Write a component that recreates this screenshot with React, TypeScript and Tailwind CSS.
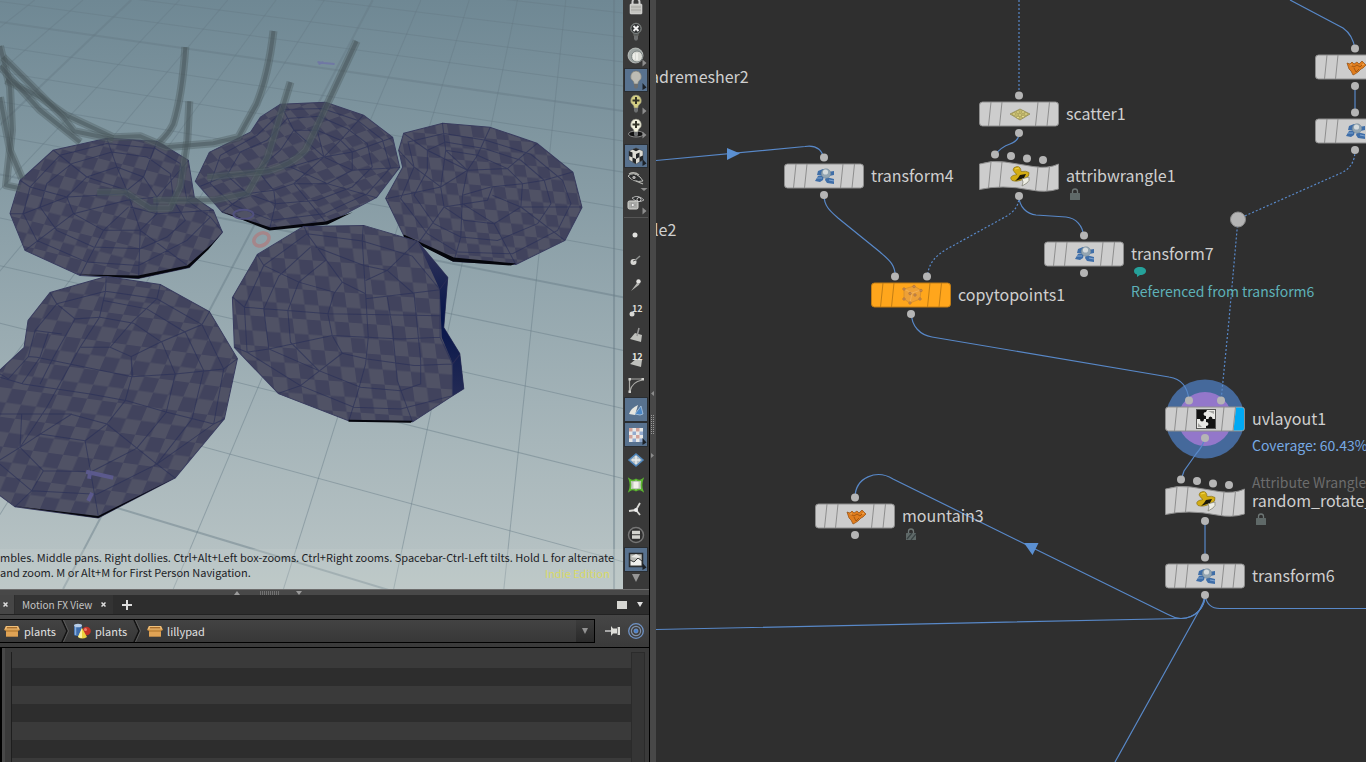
import type { ReactNode } from "react";

type Pt = [number, number];

/* ---------- 3D viewport ---------- */

const VIEW_W = 623;
const VIEW_H = 588;

// Where each floor line meets the right side of the view; every fifth is heavier.
const floorRows: { y: number; heavy?: boolean }[] = [
  { y: -10 }, { y: 13 }, { y: 37 }, { y: 62 }, { y: 86 },
  { y: 111, heavy: true }, { y: 141 }, { y: 172 }, { y: 208 }, { y: 250 },
  { y: 297, heavy: true }, { y: 350 }, { y: 408 }, { y: 478 }, { y: 561 },
  { y: 660, heavy: true },
];
const floorColumns = Array.from({ length: 14 }, (_, i) => ({
  top: 613 - i * 48.2,
  bottom: 613 - i * 110,
  heavy: i % 5 === 0,
}));

interface PadData {
  id: string;
  outline: Pt[];
  matrix: string;
  mesh: string;
  meshOrigin: string;
  shadow: string;
}

const pads: PadData[] = [
  {
    id: "pad-a",
    outline: [[107, 138], [157, 141], [188, 160], [194, 197], [213, 210], [222, 232], [208, 248], [189, 267], [138, 278], [80, 275], [25, 250], [10, 213], [20, 180], [53, 150]],
    matrix: "matrix(12 3 -5 12 4 2)",
    meshOrigin: "translate(0 0) scale(0.3333)",
    mesh: "M320 430L465 445L540 490L560 600L630 650L560 720L415 795L260 785L110 720L70 640L90 560L180 465ZM335 455L440 470L510 520L520 600L555 660L500 710L420 745L280 740L170 690L120 620L140 550L215 490ZM350 500L430 530L470 590L470 640L420 690L310 690L220 640L200 590L260 530ZM320 415L350 500L380 570L420 690L415 833M470 422L430 530L380 570M565 480L470 590L380 600M582 590L560 600L520 600M640 630L470 640L390 620M667 695L630 650M568 800L420 690M240 825L310 690L385 620M75 750L220 640L380 600M30 640L70 640L200 590L380 580M60 540L90 560L200 590M160 450L260 530L380 570",
    shadow: "M78 274 L138 278 L189 267 L208 249 L222 232 L212 243 L187 265 L138 275 Z",
  },
  {
    id: "pad-b",
    outline: [[280, 104], [325, 102], [363, 115], [392, 137], [399, 167], [376, 197], [327, 223], [269, 228], [222, 212], [200, 187], [195, 181], [209, 152], [250, 132], [260, 117]],
    matrix: "matrix(11 -4 8 9 3 0)",
    meshOrigin: "translate(200 80) scale(0.3333)",
    mesh: "M250 88L365 85L470 120L545 178L570 262L500 340L370 400L215 420L100 375L30 310L60 225L170 165ZM260 115L355 108L440 145L500 190L515 260L455 320L350 360L225 370L140 340L80 285L120 215L200 180ZM280 150L350 150L420 180L455 215L455 270L380 310L280 310L220 330L170 270L240 210ZM240 72L280 150L370 230L455 270L598 262M375 68L350 150L370 230M488 105L420 180L370 230L270 260L80 285L0 318M576 172L455 215L370 230L280 310L380 430M528 352L380 310L270 260M208 445L225 370L220 330M65 395L140 340L220 330",
    shadow: "M220 211 L269 230 L327 224 L352 212 L325 221 L270 227 Z",
  },
  {
    id: "pad-c",
    outline: [[403, 133], [442, 123], [489, 127], [536, 143], [572, 172], [581, 207], [564, 240], [515, 264], [453, 261], [418, 243], [403, 235], [385, 198], [402, 167], [398, 150]],
    matrix: "matrix(12 1 2 12 0 3)",
    meshOrigin: "translate(200 80) scale(0.3333)",
    mesh: "M622 185L730 160L855 180L990 222L1085 300L1110 370L1070 450L935 520L770 515L680 460L600 355L640 260ZM680 210L735 185L850 205L960 240L1030 300L1050 370L1010 430L890 480L780 470L700 430L640 345L680 270ZM735 210L830 225L920 265L965 310L960 380L880 430L790 420L730 380L720 320ZM725 128L735 210L800 270L785 345L780 470L760 540M868 142L830 225L800 270M1008 190L920 265L800 270L720 320L556 355M1115 275L1030 300L965 310L870 320L785 345M1143 380L960 380L875 345M1092 480L960 380M945 552L880 430L785 370M610 160L680 210L800 270M594 210L640 260L720 320M655 485L730 380L860 360L875 320",
    shadow: "M403 234 L418 241 L453 257 L515 263 L510 265 L452 261 L420 245 L403 237 Z",
  },
  {
    id: "pad-e",
    outline: [[106, 276], [160, 284], [209, 311], [237, 358], [224, 418], [175, 477], [98, 517], [15, 506], [-20, 480], [-20, 388], [24, 347], [28, 320], [50, 292]],
    matrix: "matrix(15 2 -6 14 3 2)",
    meshOrigin: "translate(0 250) scale(0.3333)",
    mesh: "M318 78L316 122L298 200L240 290L140 470L60 590L-20 640M480 102L470 145L395 215L330 290M628 182L605 222L480 275L393 318L398 378M710 325L670 355L525 370L395 378L110 320L85 318M672 505L640 520L500 485L380 450L270 430L70 400L0 380M525 682L470 640L410 592L320 520L210 490L0 490M295 800L290 770L255 570L320 520M45 768L95 720L130 660L255 662M150 127L170 160L225 205L300 200L400 218L485 275L525 370L498 485L410 592L275 662M316 122L470 145L605 222L670 355L640 520L470 640L290 730L95 720L0 640M170 160L105 240L85 318L25 385L0 370M316 122L170 160M310 150L440 175L555 245L610 360L575 505L470 640M393 318L395 378L375 450L320 520M145 245L120 320L65 400M225 205L160 320L120 400M185 250L105 240M65 490L60 590L130 660M120 550L60 590M120 550L255 570M215 490L120 550M240 290L330 290L393 318",
    shadow: "M12 505 L98 517 L175 477 L98 515 Z",
  },
  {
    id: "pad-d",
    outline: [[303, 226], [363, 225], [417, 241], [447, 277], [443, 327], [459, 353], [463, 388], [452, 395], [412, 421], [348, 420], [278, 393], [234, 347], [232, 297], [257, 254]],
    matrix: "matrix(14 1 2 15 0 0)",
    meshOrigin: "translate(200 80) scale(0.3333)",
    mesh: "M320 460L485 482L635 527L718 628L718 770L755 850L755 945L600 985L460 980L300 915L140 815L132 680L190 555ZM330 500L235 587L190 685L205 805L355 870L480 920L600 930L660 910L660 840L640 640L560 570L490 555L345 500M375 540L295 605L262 690L270 785L355 870M425 605L400 640L382 700L395 765L425 818L500 835L640 855M310 437L320 460L425 605L495 640M488 434L485 482L495 640L503 770L495 850L470 940L445 1020M170 522L190 555L295 605L400 635M97 650L132 680L262 690L385 700L718 706M103 800L140 815L205 805L395 765L500 770L600 775L718 770M235 938L300 915L425 818M650 482L560 570L495 600M718 628L495 655M755 850L640 855M635 1023L590 900L575 740L560 650",
    shadow: "M348 419 L412 420 L410 422 L348 421 Z",
  },
];

const stems = [
  "M185 47 Q182 95 173 124 Q168 134 159 142",
  "M189 101 L187 140 L180 186 L170 208 L150 208 L125 192 L97 192",
  "M273 31 Q268 75 256 104 L238 137 L213 143 L166 147 L140 136 L113 137 L66 115 L40 97 L6 80",
  "M290 82 L267 157 L247 193 L213 200 L153 200",
  "M356 41 L330 97 L305 150 Q292 164 267 171 L207 177",
  "M0 46 L10 87 L12 130 L6 185 L20 188",
  "M3 57 L63 117 L74 131 L113 139",
  "M0 66 L40 110 L80 142",
  "M0 97 L10 150 L22 178",
];

const toPoints = (pts: Pt[]) => pts.map((p) => p.join(",")).join(" ");

function Pad({ pad }: { pad: PadData }) {
  return (
    <g>
      <defs>
        <pattern id={pad.id} width="2" height="2" patternUnits="userSpaceOnUse" patternTransform={pad.matrix}>
          <rect width="2" height="2" fill="#41435d" />
          <rect width="1" height="1" fill="#505265" />
          <rect x="1" y="1" width="1" height="1" fill="#505265" />
        </pattern>
      </defs>
      <polygon points={toPoints(pad.outline)} fill={`url(#${pad.id})`} stroke="#393c5e" />
      <path d={pad.mesh} transform={pad.meshOrigin} fill="none" stroke="#2a2f58" strokeOpacity="0.65" strokeWidth="3" />
      <path d={pad.shadow} fill="#05060c" />
    </g>
  );
}

function Scene() {
  return (
    <svg className="block h-full w-full" viewBox={`0 0 ${VIEW_W} ${VIEW_H}`} preserveAspectRatio="xMinYMin slice" role="img" aria-label="Lily pads in perspective view">
      <defs>
        <linearGradient id="sky" x1="0" y1="0" x2="0" y2="1">
          <stop offset="0" stopColor="#6f8894" />
          <stop offset="0.5" stopColor="#94a7ae" />
          <stop offset="1" stopColor="#bac5c6" />
        </linearGradient>
        <linearGradient id="side" x1="0" y1="0" x2="0" y2="1">
          <stop offset="0" stopColor="#34365a" />
          <stop offset="0.5" stopColor="#06154a" />
          <stop offset="1" stopColor="#242b55" />
        </linearGradient>
      </defs>
      <rect width={VIEW_W} height={VIEW_H} fill="url(#sky)" />
      <g stroke="#667a85" strokeOpacity="0.45">
        {floorRows.map(({ y, heavy }) => {
          const slope = 0.143 + (y - 111) * 0.00029;
          return <line key={y} x1="0" y1={y - VIEW_W * slope} x2={VIEW_W} y2={y} strokeWidth={heavy ? 2 : 1} />;
        })}
        {floorColumns.map(({ top, bottom, heavy }) => (
          <line key={top} x1={top} y1="0" x2={bottom} y2={VIEW_H} strokeWidth={heavy ? 2 : 1} />
        ))}
      </g>
      {pads.map((pad) => (
        <Pad key={pad.id} pad={pad} />
      ))}
      <path d="M417 241 L447 277 L443 327 L459 353 L463 388 L452 395 L452 363 L441 337 L439 289 Z" fill="url(#side)" />
      <path d="M452 363 L459 354 M439 289 L447 278" stroke="#282b54" />
      <g fill="none" strokeLinejoin="round">
        {stems.map((d) => (
          <g key={d}>
            <path d={d} stroke="#465257" strokeOpacity="0.35" strokeWidth="8" />
            <path d={d} stroke="#7d8b90" strokeOpacity="0.2" strokeWidth="6" />
            <path d={d} stroke="#3d494d" strokeOpacity="0.4" strokeWidth="4" />
          </g>
        ))}
      </g>
      <ellipse cx="261" cy="239" rx="8" ry="6" fill="none" stroke="#a5868a" strokeWidth="3.5" transform="rotate(-30 261 239)" />
      <ellipse cx="243" cy="214" rx="10" ry="4.500" fill="none" stroke="#50507e" strokeWidth="2" />
      <path d="M317 62 l6 1 l11 1 M318 64 l5 -2" stroke="#7078a4" strokeWidth="2" fill="none" />
      <path d="M86 471 l27 6 M90 470 l-1 8 M92 492 l-4 8" stroke="#5d5b91" strokeOpacity="0.9" strokeWidth="4" fill="none" />
    </svg>
  );
}

/* ---------- Display toolbar ---------- */

const bulb = (fill: string) => (
  <>
    <path d="M12 3a5.500 5.500 0 0 0-3 10q1 1 1 3h4q0-2 1-3a5.500 5.500 0 0 0-3-10z" fill={fill} stroke="#77776f" strokeWidth="0.6" />
    <path d="M10 16h4v3l-1 1.500h-2l-1-1.500z" fill="#6d6f70" />
  </>
);
const flyout = <path d="M18.500 15.500v7l4-3.500z" fill="#8d8d8d" />;
const flyoutDark = <path d="M18.500 15v7l4-2.500z" fill="#1b2026" />;

interface Tool {
  name: string;
  on?: boolean;
  icon: ReactNode;
}

const upperTools: Tool[] = [
  { name: "Lock camera", icon: <><path d="M8.500 9V6a3.500 3.500 0 0 1 7 0v3" fill="none" stroke="#c9c9c9" strokeWidth="2" /><rect x="6" y="8" width="12" height="10" rx="1" fill="#c4c4c0" stroke="#eee" strokeWidth="0.5" /><path d="M7 11h10M7 14h10" stroke="#a4a4a0" /></> },
  { name: "No lighting", icon: <>{bulb("#56595a")}<circle cx="12" cy="8.500" r="5" fill="#303233" stroke="#7e8484" /><path d="M9.500 6l5 5m0-5l-5 5" stroke="#f2f2f2" strokeWidth="2" /></> },
  { name: "Headlight", icon: <><circle cx="11.500" cy="11.500" r="7.500" fill="#9da4a2" stroke="#d3d6d2" strokeWidth="0.7" /><circle cx="13" cy="12.500" r="5.500" fill="#d9dbd5" stroke="#7d8584" /><path d="M10 9.500v6M13 9v7" stroke="#f8f8f5" strokeWidth="1.200" />{flyout}</> },
  { name: "Normal lighting", on: true, icon: <>{bulb("#bdbcb4")}{flyoutDark}</> },
  { name: "High quality lighting", icon: <>{bulb("#d5cf83")}<path d="M12 5v7M8.500 8.500h7" stroke="#343428" strokeWidth="2" />{flyout}</> },
  { name: "Lighting with shadows", icon: <><ellipse cx="12" cy="18" rx="7.500" ry="3" fill="#111" stroke="#888" />{bulb("#f1f0dc")}<path d="M12 5v7M8.500 8.500h7" stroke="#343428" strokeWidth="2" />{flyout}</> },
];
const shadingTools: Tool[] = [
  { name: "Material shading", on: true, icon: <><path d="M5 7l7-3 7 3v9l-7 4-7-4z" fill="#dedcd4" stroke="#34383c" strokeWidth="0.5" /><path d="M5 7l3.500 1.500v5L5 12zM8.500 13.500L12 15v5l-3.500-2zM12 10l3.500-1.500v4.500L12 15zM15.500 13l3.500-1.500V16l-3.500 2zM12 4l3.500 1.500L12 7.200 8.500 5.500z" fill="#222426" />{flyoutDark}</> },
  { name: "Hide other objects", icon: <><path d="M4 8q5-5 12 1l3 4q-9 2-15-5z" fill="#2b2d2e" stroke="#bebfbb" /><circle cx="10" cy="9.500" r="2.200" fill="#aaa" stroke="#222" /><path d="M12 13l7 3M5 6q5-3 10 1" stroke="#b5b5b0" strokeWidth="1.300" fill="none" /><path d="M16.500 20h7l-3.500 3z" fill="#8d8d8d" /></> },
  { name: "Ghost other objects", icon: <><path d="M8 6q6-4 12 2q-6 4-12-2z" fill="#2b2d2e" stroke="#aaa" /><circle cx="15" cy="7.500" r="2" fill="#222" stroke="#ccc" /><rect x="4" y="9" width="10" height="8" rx="1.500" fill="#a9aaa7" stroke="#d5d5d2" /><path d="M7.500 11v4l4-2z" fill="#eee" stroke="#777" strokeWidth="0.5" />{flyout}</> },
];
const lowerTools: Tool[] = [
  { name: "Show points", icon: <circle cx="11" cy="12" r="2.500" fill="#e2e2df" /> },
  { name: "Show point normals", icon: <><path d="M8 15l8-7" stroke="#8d908e" strokeWidth="1.500" /><circle cx="9.500" cy="14" r="3" fill="#d6d6d3" /><path d="M9 13l3-1" stroke="#555" /></> },
  { name: "Show point trails", icon: <><path d="M7 18l6-8 2.500 1.500z" fill="#b5b6b2" /><circle cx="14.500" cy="8.500" r="2.200" fill="#e2e2df" /></> },
  { name: "Show point numbers", icon: <><circle cx="8" cy="16" r="2.500" fill="#d9d9d5" /><text x="8" y="14" fontSize="9" fontWeight="700" fill="#dadad6">12</text></> },
  { name: "Show primitive normals", icon: <><path d="M6 16l5-6 7 2-1 7z" fill="#bfc0bc" /><path d="M13 13l2-8" stroke="#999" strokeWidth="1.500" /></> },
  { name: "Show primitive numbers", icon: <><path d="M6 16l6-5 6 1-1 7z" fill="#bfc0bc" /><text x="8" y="12" fontSize="9" fontWeight="700" fill="#e5e5e1">12</text></> },
  { name: "Show hulls", icon: <><path d="M5.500 19V6H19M6 18Q8 9 18 7" fill="none" stroke="#a8a8a4" strokeWidth="1.200" /><path d="M4.500 5h2.500v2.500H4.500zM4.500 17.500h2.500V20H4.500zM17.500 5H20v2.500h-2.500z" fill="#d0d0cc" /></> },
  { name: "Show primitive handles", on: true, icon: <><path d="M5 16q2-6 9-9l-3 10z" fill="#e6e6e0" /><path d="M11 16l6-8 2 8-3 1z" fill="#4a86c5" stroke="#bcd3ea" strokeWidth="0.7" /></> },
  { name: "Show UV texture", on: true, icon: <><rect x="5" y="5" width="14" height="14" fill="#e8e9e8" /><path d="M5 5h3.500v3.500H5zM12 5h3.500v3.500H12zM5 12h3.500v3.500H5zM12 12h3.500v3.500H12z" fill="#d0a39b" /><path d="M8.500 8.500H12V12H8.500zM15.500 8.500H19V12h-3.500zM8.500 15.500H12V19H8.500zM15.500 15.500H19V19h-3.500z" fill="#93abcf" />{flyoutDark}</> },
  { name: "Show vertices", icon: <><path d="M12 6l7 6-7 6-7-6z" fill="#b9c3c9" stroke="#4f86bb" strokeWidth="1.500" /><path d="M12 8v8M8 12h8" stroke="#e8ecec" strokeWidth="1.500" /></> },
  { name: "Show groups", icon: <><path d="M5.500 6.500q3 2 6.500 0q3.500 2 6.500 0q-2 5.500 0 11q-3-2-6.500 0q-3.500-2-6.500 0q2-5.500 0-11z" fill="#c6cbc1" stroke="#5bb62f" strokeWidth="1.700" /><path d="M9.500 9h5v6h-5z" fill="#f1f1ea" /></> },
  { name: "Show origin axes", icon: <><path d="M12 12l4-7M12 12l-7 1M12 12l4 5" stroke="#d9d9d5" strokeWidth="1.800" /><circle cx="12" cy="12" r="2" fill="#eee" /></> },
  { name: "Display info", icon: <><circle cx="12" cy="12" r="7.500" fill="#303030" stroke="#757575" strokeWidth="1.500" /><path d="M8 9.500h8M8 14h8" stroke="#d4d4cf" strokeWidth="3.500" /></> },
  { name: "Background image", on: true, icon: <><rect x="5.500" y="5.500" width="13" height="13" fill="#b7b8b3" stroke="#25282b" strokeWidth="1.500" /><path d="M6 12l4 2 4-4 4 3v5H6z" fill="#f1f1ee" stroke="#383a3b" strokeWidth="1" /><path d="M7 9l5-3 5 3-3 1z" fill="#e9e9e5" />{flyoutDark}</> },
];

function ToolButton({ tool, size }: { tool: Tool; size: string }) {
  const tone = tool.on ? "border border-[#2a2e32] bg-[#58728f]" : "border border-transparent";
  return (
    <button type="button" aria-label={tool.name} aria-pressed={!!tool.on} className={`flex w-6 shrink-0 items-center justify-center ${size} ${tone}`}>
      <svg className="h-6 w-6 shrink-0" viewBox="0 0 24 24">{tool.icon}</svg>
    </button>
  );
}

function DisplayToolbar() {
  return (
    <div className="flex w-[26px] shrink-0 flex-col items-center overflow-hidden bg-[#393939]" role="toolbar" aria-label="Display options">
      <div className="-mt-1 flex flex-col">
        {upperTools.map((t) => <ToolButton key={t.name} tool={t} size="h-6" />)}
      </div>
      <div className="mt-1 flex flex-col">
        {shadingTools.map((t) => <ToolButton key={t.name} tool={t} size="h-6" />)}
      </div>
      <div className="mt-px mb-1 h-px w-6 shrink-0 bg-[#555]" />
      <div className="flex flex-col">
        {lowerTools.map((t) => <ToolButton key={t.name} tool={t} size="h-[25px]" />)}
      </div>
      <button type="button" aria-label="More options" className="flex h-3 w-6 items-center justify-center">
        <svg className="h-2 w-2" viewBox="0 0 8 8"><path d="M0 0h8L4 8z" fill="#969696" /></svg>
      </button>
    </div>
  );
}

/* ---------- Lower-left pane ---------- */

const BoxIcon = () => (
  <svg className="h-4 w-4" viewBox="0 0 16 16">
    <path d="M2 3h12l2 4-2 1v5.500H2V8L0 7z" fill="#c58a3e" />
    <path d="M2 3h12l1.500 3.500H.5z" fill="#f0bf7a" />
    <path d="M3 4h10l.5 1.500h-11z" fill="#a76d2a" />
    <path d="M2 9h12v4.500H2z" fill="#e0a355" />
  </svg>
);
const ShapesIcon = () => (
  <svg className="h-4 w-[18px]" viewBox="0 0 18 16">
    <rect x="1" y="2" width="8" height="11" rx="2" fill="#3d6cab" />
    <ellipse cx="5" cy="2.500" rx="4" ry="1.800" fill="#b8cee8" />
    <path d="M2.500 4v8" stroke="#88aedb" strokeWidth="1.500" />
    <circle cx="13.500" cy="8" r="4.300" fill="#c13327" />
    <circle cx="12.500" cy="6.500" r="1.500" fill="#ee7d6d" />
    <path d="M9 5l5 9q-5 3-9 0z" fill="#ecd23e" />
    <path d="M9 5l0 10q-2 0-4-1z" fill="#faf0a0" />
  </svg>
);
const Chevron = () => (
  <svg className="h-[22px] w-2 shrink-0" viewBox="0 0 8 22" fill="none">
    <path d="M1 0l5 11-5 11" stroke="#121212" strokeWidth="1.500" />
    <path d="M2.500 0l5 11-5 11" stroke="#5b5b5b" />
  </svg>
);

function LowerPane() {
  return (
    <section className="flex shrink-0 flex-col bg-[#3a3a3a]">
      <div className="flex h-[6px] items-center border-t border-[#6c6c6c] bg-[#484848] pl-[234px]">
        <svg className="h-1 w-[70px]" viewBox="0 0 70 4" fill="#9b9b9b">
          <path d="M0 4h6L3 0zM62 0h6l-3 4z" />
          <path d="M26 1h20M26 3h20" stroke="#9b9b9b" strokeDasharray="1 1" />
        </svg>
      </div>
      <div className="flex h-5 items-stretch border-b border-[#222] bg-[#2d2d2d] text-[10px] leading-4 text-[#c4c4c4]" role="tablist">
        <div className="flex w-[14px] items-center bg-[#464646] pl-[3px]">
          <button type="button" aria-label="Close tab"><svg className="h-[5px] w-[5px]" viewBox="0 0 5 5"><path d="M.5.5l4 4m0-4l-4 4" stroke="#ddd" strokeWidth="1.500" /></svg></button>
        </div>
        <div className="ml-px flex w-[98px] items-center justify-between bg-[#333] pr-[7px] pl-[7px]">
          <button type="button" role="tab" aria-selected="false" className="whitespace-nowrap">Motion FX View</button>
          <button type="button" aria-label="Close Motion FX View"><svg className="h-[5px] w-[5px]" viewBox="0 0 5 5"><path d="M.5.5l4 4m0-4l-4 4" stroke="#ddd" strokeWidth="1.500" /></svg></button>
        </div>
        <button type="button" aria-label="New tab" className="ml-[9px] flex items-center"><svg className="h-[10px] w-[10px]" viewBox="0 0 10 10"><path d="M5 0v10M0 5h10" stroke="#ddd" strokeWidth="2" /></svg></button>
        <div className="ml-auto flex items-center gap-[10px] pr-[6px]">
          <button type="button" aria-label="Maximize pane" className="h-2 w-[10px] bg-[#d6d6d2]" />
          <button type="button" aria-label="Pane menu" className="flex"><svg className="h-[5px] w-[6px]" viewBox="0 0 6 5"><path d="M0 0h6L3 5z" fill="#e0e0e0" /></svg></button>
        </div>
      </div>
      <div className="flex h-[33px] items-center border-b border-black bg-gradient-to-b from-[#464646] to-[#3a3a3a] text-[11px] leading-4 text-[#e0e0e0]">
        <nav aria-label="Network path" className="flex h-6 min-w-0 flex-1 items-center border border-l-0 border-black bg-gradient-to-b from-[#434343] to-[#383838] pl-1">
          <a href="#plants" className="flex items-center gap-1"><BoxIcon />plants</a>
          <span className="w-[5px]" /><Chevron />
          <a href="#geo" className="ml-1 flex items-center gap-1"><ShapesIcon />plants</a>
          <span className="w-[6px]" /><Chevron />
          <a href="#lillypad" className="ml-[6px] flex items-center gap-1"><BoxIcon />lillypad</a>
          <button type="button" aria-label="Path history" className="ml-auto flex h-full w-[18px] items-center justify-center bg-gradient-to-b from-[#3c3c3c] to-[#2a2a2a]"><svg className="h-[6px] w-[6px]" viewBox="0 0 6 6"><path d="M0 0h6L3 6z" fill="#929292" /></svg></button>
        </nav>
        <button type="button" aria-label="Pin" className="ml-[10px]">
          <svg className="block h-4 w-4" viewBox="0 0 16 16"><path d="M0 8h6" stroke="#c9c9c9" strokeWidth="1.500" /><path d="M6 3l2 2.500h4V4h3v8h-3v-1.500H8L6 13z" fill="#deded9" /><path d="M12.500 4v8" stroke="#666" strokeWidth="0.8" /></svg>
        </button>
        <button type="button" aria-label="Follow selection" className="mr-[5px] ml-[7px]">
          <svg className="block h-4 w-4" viewBox="0 0 16 16" fill="none" stroke="#6f93c6"><circle cx="8" cy="8" r="7.300" strokeWidth="1.300" /><circle cx="8" cy="8" r="4.600" strokeWidth="1.200" stroke="#8192aa" /><circle cx="8" cy="8" r="2" fill="#4681d0" /></svg>
        </button>
      </div>
      <div className="flex h-[114px]">
        <div className="w-[5px] border-l-2 border-black bg-[#484848]" />
        <div className="mt-1 w-[7px] border-r border-[#1e1e1e]" />
        <div className="min-w-0 flex-1">
          <div className="h-5 bg-[#3a3a3a]" />
          {["a", "b", "c"].map((k) => (
            <div key={k}>
              <div className="h-[18px] bg-[#2d2d2d]" />
              <div className={k === "c" ? "h-1 bg-[#3a3a3a]" : "h-[18px] bg-[#3a3a3a]"} />
            </div>
          ))}
        </div>
        <div className="mt-1 mr-1 w-[14px] border border-b-0 border-[#2b2b2b] bg-[#353535]" />
      </div>
    </section>
  );
}

/* ---------- Network editor ---------- */

const ORIGIN = 656;

type Kind = "transform" | "mountain" | "scatter" | "wrangle" | "copy" | "uv";

interface NodeData {
  id: string;
  kind: Kind;
  x: number;
  y: number;
  label?: string;
  lock?: "solid" | "striped";
}

const nodes: NodeData[] = [
  { id: "n1", kind: "transform", x: 824, y: 176, label: "transform4" },
  { id: "n2", kind: "scatter", x: 1019, y: 114, label: "scatter1" },
  { id: "n3", kind: "wrangle", x: 1019, y: 176, label: "attribwrangle1", lock: "solid" },
  { id: "n4", kind: "transform", x: 1084, y: 254, label: "transform7" },
  { id: "n5", kind: "copy", x: 911, y: 295, label: "copytopoints1" },
  { id: "n6", kind: "uv", x: 1205, y: 419, label: "uvlayout1" },
  { id: "n7", kind: "wrangle", x: 1205, y: 501, label: "random_rotate_", lock: "solid" },
  { id: "n8", kind: "transform", x: 1205, y: 576, label: "transform6" },
  { id: "n9", kind: "mountain", x: 855, y: 516, label: "mountain3", lock: "striped" },
  { id: "n10", kind: "mountain", x: 1355, y: 67 },
  { id: "n11", kind: "transform", x: 1355, y: 131 },
];

// Glyphs are drawn about (0, 0).
const glyphs: Record<Kind, ReactNode> = {
  transform: (
    <g>
      <path d="M-7-5l5-2 3 2-3 5-6-1zM3-4l6-1v4l-5 1zM-10 5l3-5 6 0-1 4-3 2zM1 1l8 2 0 5-7-1-2-3z" fill="#3f6ea8" />
      <path d="M-8 2l5 0M4 4l5 1" stroke="#7fa3cf" strokeWidth="1.200" />
      <circle cx="1" cy="-2.500" r="4.700" fill="#93a5b2" stroke="#74899a" strokeWidth="0.600" />
      <circle cx="0.500" cy="-4" r="2.600" fill="#d5dbdd" />
    </g>
  ),
  mountain: (
    <g>
      <path d="M-9-4l3 1 2-2 2 2 3-2 2 2 3-3 1 1 3 3-3 3-2 1-3 3-3 2-2 1-2-4-2-2z" fill="#e07d1d" stroke="#8f4e12" strokeWidth="0.700" />
      <path d="M-6-2l4 2 3-2 3 2 3-3M-2 1l2 4 3-3" stroke="#8a470f" strokeWidth="0.700" fill="none" />
      <path d="M-6-2l2 0M6-2l2-1" stroke="#f7b25e" />
    </g>
  ),
  scatter: (
    <g>
      <path d="M-10 0L0-5 10 0 0 6z" fill="#c1b669" stroke="#8e854c" strokeWidth="0.700" />
      <g fill="#eee28c" stroke="#76703e" strokeWidth="0.400">
        <circle cx="-6" cy="0" r="1.300" /><circle cx="-2" cy="-2" r="1.300" /><circle cx="3" cy="-2" r="1.300" /><circle cx="6" cy="0" r="1.300" /><circle cx="0" cy="1" r="1.300" /><circle cx="-2" cy="3.500" r="1.300" /><circle cx="3" cy="2.500" r="1.300" />
      </g>
    </g>
  ),
  wrangle: (
    <g>
      <path d="M-7-6q0-3 4-3.500 4 0 4 5 5-1 8 1 1 4-4 6-8 4-13 2-3-3 1-5l4-1q-2-1-4-4.500z" fill="#d3ad14" stroke="#7d6812" strokeWidth="0.600" />
      <path d="M0-1l6-1-2 4-9 3 3-3z" fill="#1c1a0c" />
      <path d="M-5-7l4-1" stroke="#f1d44e" strokeWidth="1.200" />
      <path d="M2 3l3-1 4-1q1 4-2 6l-5 3 1-4z" fill="#eeeee4" stroke="#87877b" strokeWidth="0.800" />
    </g>
  ),
  copy: (
    <g>
      <path d="M-8-6l10-3 7 4-1 9-10 4-6-4z" fill="#eda037" stroke="#cf8a2c" strokeWidth="0.700" />
      <path d="M-8-6L0-2l9-3M0-2l-2 10" stroke="#f2b055" fill="none" />
      <g fill="#c98a4e" stroke="#a56d38" strokeWidth="0.500">
        <circle cx="-8" cy="-6" r="1.300" /><circle cx="2" cy="-8.500" r="1.300" /><circle cx="9" cy="-4.500" r="1.300" /><circle cx="8" cy="4" r="1.300" /><circle cx="-2" cy="8" r="1.300" /><circle cx="-8" cy="4" r="1.300" /><circle cx="-2" cy="-1.500" r="1.300" /><circle cx="3" cy="0" r="1.300" />
      </g>
    </g>
  ),
  uv: (
    <g>
      <rect x="-9.500" y="-9.500" width="19" height="19" fill="#131313" stroke="#555" />
      <path d="M1-9h8V0H6.500q0-2.500-2-2.500T2.500 0H0v-3q-2.500 0-2.500-2T0-7zM-9 0h3q0 2.500 2 2.500T-2 0h2v3q2.500 0 2.500 2T0 7v2h-9z" fill="#e9e9e6" />
      <path d="M2-8h6v3zM-8 8v-4l4 4z" fill="#a5a5a2" />
    </g>
  ),
};

function Lock({ striped }: { striped: boolean }) {
  return (
    <svg className="h-3 w-[10px]" viewBox="0 0 10 12">
      <path d="M2.500 5V3.500a2.500 2.500 0 0 1 5 0V5" fill="none" stroke="#6d7675" strokeWidth="1.300" />
      <rect y="5" width="10" height="7" rx="0.500" fill="#5f6968" />
      {striped && <path d="M1 11l5-6M5 12l5-6" stroke="#3a4344" strokeWidth="1.200" />}
    </svg>
  );
}

function NodeShape({ kind }: { kind: Kind }) {
  const fill = kind === "copy" ? "#ffa61c" : "#cdcdcd";
  const edge = kind === "copy" ? "#c27d14" : "#8e8e8e";
  const wavy = kind === "wrangle";
  const d = wavy
    ? "M-39.500-12Q-27-16-14-14T14-9.500T39.500-12V13Q27 17 12 14T-16 11T-39.500 13.500Z"
    : "M-36.500-12h73q3 0 3 3v18q0 3-3 3h-73q-3 0-3-3v-18q0-3 3-3z";
  return (
    <svg className="block h-20 w-20 overflow-visible" viewBox="-40 -40 80 80">
      <path d={d} fill={fill} stroke={edge} />
      {kind === "uv" && <path d="M31-11.500h5.500q2.500 0 2.500 2.500v18q0 2.500-2.500 2.500h-8z" fill="#00a9f4" />}
      <path
        d={wavy ? "M-28-14.500L-30.500 12M-17-14L-19.500 11M19-9.500L16.500 14.500M30.500-10L28 15" : "M-28-12L-30.500 12M-17-12L-19.500 12M19-12L16.500 12M30.500-12L28 12"}
        stroke={edge}
        fill="none"
      />
      <g transform="translate(1 0)">{glyphs[kind]}</g>
      <g fill="#b5b5b5">
        {kind === "wrangle" && <><circle cx="-24" cy="-21.500" r="4" /><circle cx="-8" cy="-20" r="4" /><circle cx="8" cy="-17.500" r="4" /><circle cx="24" cy="-16" r="4" /><circle cy="20" r="4" /></>}
        {(kind === "copy" || kind === "uv") && <><circle cx="-16" cy="-18.500" r="4" /><circle cx="16" cy="-18.500" r="4" /><circle cy="19" r="4" /></>}
        {(kind === "transform" || kind === "mountain" || kind === "scatter") && <><circle cy="-18.500" r="4" /><circle cy="19" r="4" /></>}
      </g>
    </svg>
  );
}

const Node = ({ node }: { node: NodeData }) => (
  <div className="absolute flex h-20 items-center" style={{ left: node.x - ORIGIN - 40, top: node.y - 40 }}>
    <button type="button" aria-label={node.label ?? node.kind} className="h-20 w-20 shrink-0">
      <NodeShape kind={node.kind} />
    </button>
    {node.label && <span className="ml-[7px] pb-[2px] text-[16px] leading-5 whitespace-nowrap text-[#cfcfcf]">{node.label}</span>}
    {node.lock && <span className="absolute top-[52px] left-[91px]"><Lock striped={node.lock === "striped"} /></span>}
  </div>
);

const solidWires = [
  "M656 160.500L805 146.500Q820 144 824 158",
  "M824 195C824 206 830 211 838 218L880 252C889 260 895 264 895.500 277",
  "M1019 133Q1019 141 1010 144T995 155",
  "M1019 196C1019 207 1027 214 1036 215L1066 217C1076 218 1083 226 1083.500 236",
  "M911.500 314C911.500 326 920 335 932 337L1169 377C1183 379 1188 388 1189 401",
  "M1205 438Q1203 446 1196 454L1184 471L1181 480",
  "M1205 520V558",
  "M1205 595Q1207 608.500 1220 608.500H1366",
  "M1205 595C1205 607 1196 618 1181 618.500L656 629.500",
  "M1205 595C1205 607 1196 618 1181 618.500Q1174 618 1167 614L893 479C877 469 855 477 855 498",
  "M1205 595Q1204 602 1200 609L1115 762",
  "M1290 0L1343 28Q1353 35 1355 49",
  "M1355 86V113",
];
const dottedWires = [
  "M1019 0V92",
  "M1019 196C1019 208 1012 213 1005 217L947 249C935 256 928 264 927.500 277",
  "M1355 150C1355 162 1350 169 1341 173L1238 219L1229 320L1221 401",
];

function Network() {
  return (
    <main className="relative min-w-0 overflow-hidden bg-[#2f2f2f]">
      <svg className="absolute inset-0 h-full w-full" aria-hidden="true">
        <g transform={`translate(${-ORIGIN} 0)`}>
          <circle cx="1205" cy="419" r="39.500" fill="#45699b" />
          <circle cx="1205" cy="419" r="27" fill="#9377ca" />
          <g fill="none" stroke="#5888c8" strokeWidth="1.200">
            {solidWires.map((d) => <path key={d} d={d} />)}
            {dottedWires.map((d) => <path key={d} d={d} strokeDasharray="2 2" />)}
          </g>
          <path d="M727 148L740 153.500L727 160zM1024 543h14.500L1032.500 555z" fill="#5b90d2" />
          <circle cx="1238" cy="219.500" r="7.500" fill="#b4b4b4" stroke="#8c8c8c" />
        </g>
      </svg>
      {nodes.map((n) => <Node key={n.id} node={n} />)}
      <span className="absolute top-[66px] -left-[6px] text-[16px] leading-5 text-[#cfcfcf]">adremesher2</span>
      <span className="absolute top-[219px] -left-[2px] text-[16px] leading-5 text-[#cfcfcf]">le2</span>
      <svg className="absolute top-[267px] left-[478px] h-[10px] w-3" viewBox="0 0 12 10"><path d="M6 0c4 0 6 2 6 4s-2 4-6 4l-3 2 0-2.500C1 7 0 6 0 4c0-2 2-4 6-4z" fill="#25a19a" /></svg>
      <span className="absolute top-[283px] left-[475px] text-[14px] leading-4 whitespace-nowrap text-[#5eb1b8]">Referenced from transform6</span>
      <span className="absolute top-[437px] left-[596px] text-[14px] leading-4 whitespace-nowrap text-[#76a9e4]">Coverage: 60.43%</span>
      <span className="absolute top-[474px] left-[596px] text-[14px] leading-4 whitespace-nowrap text-[#6c6c6c]">Attribute Wrangle</span>
    </main>
  );
}

/* ---------- Page ---------- */

export default function App() {
  return (
    <div className="grid h-screen grid-cols-[650fr_6px_710fr] overflow-hidden bg-[#2f2f2f] font-['Noto_Sans_CJK_SC',sans-serif]">
      <div className="flex min-w-0 flex-col border-r border-black">
        <div className="flex min-h-0 flex-1">
          <section className="relative min-w-0 flex-1 overflow-hidden" aria-label="Scene view">
            <Scene />
            <div className="absolute inset-x-0 bottom-0 h-10 overflow-hidden bg-[#c8d0ce]/30 pt-px text-[11px] leading-[15px] whitespace-nowrap text-[#1d2326]">
              <p>mbles. Middle pans. Right dollies. Ctrl+Alt+Left box-zooms. Ctrl+Right zooms. Spacebar-Ctrl-Left tilts. Hold L for alternate</p>
              <p>and zoom. M or Alt+M for First Person Navigation.</p>
            </div>
            <span className="absolute right-[13px] bottom-2 text-[11px] leading-4 text-[#d9da68]">Indie Edition</span>
          </section>
          <DisplayToolbar />
        </div>
        <LowerPane />
      </div>
      <div className="flex items-start bg-[#484848] pt-[390px]" role="separator" aria-orientation="vertical">
        <svg className="h-[70px] w-[6px]" viewBox="0 0 6 70" fill="#8c8c8c">
          <path d="M4 1v5L1 3.500zM1 63v5l3-2.500z" />
          <path d="M1.500 25v20M3.500 25v20" stroke="#999" strokeDasharray="1 1" />
        </svg>
      </div>
      <Network />
    </div>
  );
}
